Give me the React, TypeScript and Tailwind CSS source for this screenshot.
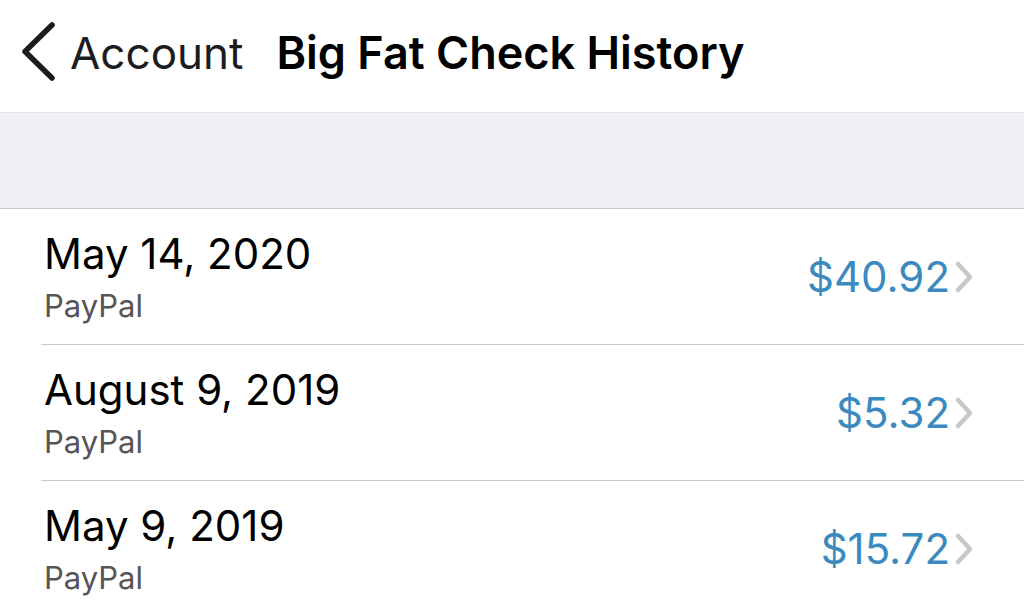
import React from 'react';

type Payment = {
  date: string;
  method: string;
  amount: string;
};

const payments: Payment[] = [
  { date: 'May 14, 2020', method: 'PayPal', amount: '$40.92' },
  { date: 'August 9, 2019', method: 'PayPal', amount: '$5.32' },
  { date: 'May 9, 2019', method: 'PayPal', amount: '$15.72' },
];

const BackChevron = () => (
  <svg width="40" height="62" viewBox="0 0 40 62" className="shrink-0">
    <path d="M32 3 L5 29.5 L32 56" fill="none" stroke="#1c1c1e" strokeWidth="5.5" strokeLinecap="round" strokeLinejoin="round" />
  </svg>
);

const RowChevron = () => (
  <svg width="22" height="34" viewBox="0 0 22 34" className="shrink-0">
    <path d="M5 4 L17 17 L5 30" fill="none" stroke="#c7c7cc" strokeWidth="4.5" strokeLinecap="round" strokeLinejoin="round" />
  </svg>
);

const PaymentRow = ({ payment }: { payment: Payment }) => (
  <div className="pl-[41px] bg-white">
    <div className="h-[136px] border-b border-[#c8c7cc] pl-[3px] pr-[49px] flex items-center justify-between">
      <div className="flex flex-col">
        <span className="text-[42px] leading-[51px] text-black">{payment.date}</span>
        <span className="mt-[8px] text-[31px] leading-[38px] text-[#555558]">{payment.method}</span>
      </div>
      <div className="flex items-center gap-[3px]">
        <span className="text-[42px] leading-[51px] text-[#3a8abf]">{payment.amount}</span>
        <RowChevron />
      </div>
    </div>
  </div>
);

export default function App() {
  return (
    <div className="w-[1024px] h-[612px] overflow-hidden bg-white font-['Inter','Liberation_Sans',sans-serif]">
      <div className="h-[112px] bg-white flex items-center pl-[20px] pb-[6px]">
        <BackChevron />
        <span className="ml-[10px] text-[44px] leading-[54px] text-[#1c1c1e]">Account</span>
        <span className="ml-[33px] text-[45px] leading-[54px] font-semibold text-black">Big Fat Check History</span>
      </div>
      <div className="h-[97px] bg-[#efeff4] border-t border-[#e4e4e8] border-b border-b-[#c8c7cc]" />
      {payments.map(p => (
        <PaymentRow key={p.date} payment={p} />
      ))}
    </div>
  );
}
